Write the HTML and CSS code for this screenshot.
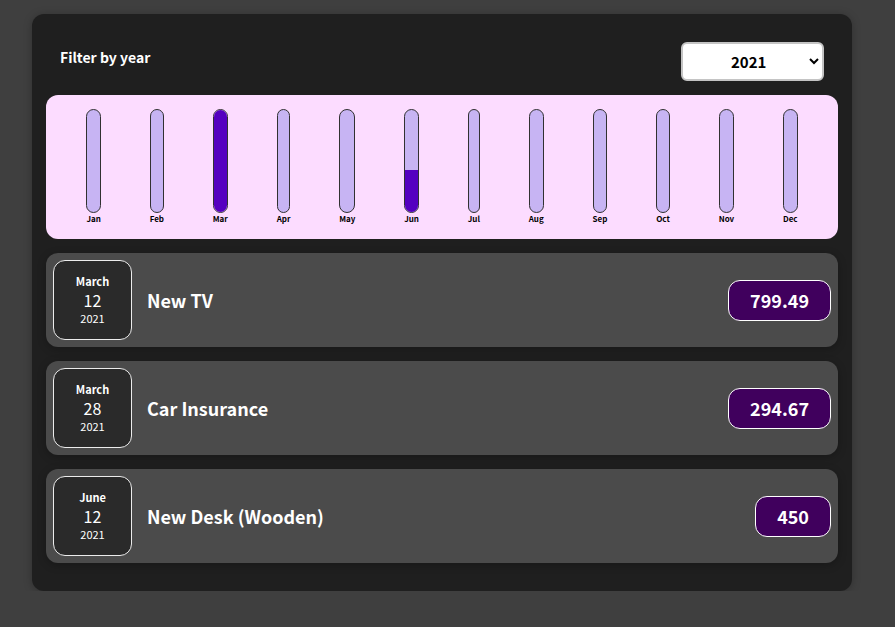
FILE: index.html
```html
<!DOCTYPE html>
<html lang="en">
<head>
<meta charset="utf-8">
<title>Expenses</title>
<link rel="stylesheet" href="styles.css">
</head>
<body>
<div class="expenses">
  <div class="filter">
    <div class="filter-control">
      <label class="filter-label">Filter by year</label>
      <select class="filter-select">
        <option>2022</option>
        <option selected>2021</option>
        <option>2020</option>
        <option>2019</option>
      </select>
    </div>
  </div>

  <div class="chart">
    <div class="bar"><div class="bar-inner"><div class="bar-fill" style="height:0%"></div></div><div class="bar-label">Jan</div></div>
    <div class="bar"><div class="bar-inner"><div class="bar-fill" style="height:0%"></div></div><div class="bar-label">Feb</div></div>
    <div class="bar"><div class="bar-inner"><div class="bar-fill" style="height:100%"></div></div><div class="bar-label">Mar</div></div>
    <div class="bar"><div class="bar-inner"><div class="bar-fill" style="height:0%"></div></div><div class="bar-label">Apr</div></div>
    <div class="bar"><div class="bar-inner"><div class="bar-fill" style="height:0%"></div></div><div class="bar-label">May</div></div>
    <div class="bar"><div class="bar-inner"><div class="bar-fill" style="height:41.1%"></div></div><div class="bar-label">Jun</div></div>
    <div class="bar"><div class="bar-inner"><div class="bar-fill" style="height:0%"></div></div><div class="bar-label">Jul</div></div>
    <div class="bar"><div class="bar-inner"><div class="bar-fill" style="height:0%"></div></div><div class="bar-label">Aug</div></div>
    <div class="bar"><div class="bar-inner"><div class="bar-fill" style="height:0%"></div></div><div class="bar-label">Sep</div></div>
    <div class="bar"><div class="bar-inner"><div class="bar-fill" style="height:0%"></div></div><div class="bar-label">Oct</div></div>
    <div class="bar"><div class="bar-inner"><div class="bar-fill" style="height:0%"></div></div><div class="bar-label">Nov</div></div>
    <div class="bar"><div class="bar-inner"><div class="bar-fill" style="height:0%"></div></div><div class="bar-label">Dec</div></div>
  </div>

  <ul class="list">
    <li class="item">
      <div class="date">
        <div class="date-month">March</div>
        <div class="date-day">12</div>
        <div class="date-year">2021</div>
      </div>
      <h2 class="item-title">New TV</h2>
      <div class="price">799.49</div>
    </li>
    <li class="item">
      <div class="date">
        <div class="date-month">March</div>
        <div class="date-day">28</div>
        <div class="date-year">2021</div>
      </div>
      <h2 class="item-title">Car Insurance</h2>
      <div class="price">294.67</div>
    </li>
    <li class="item">
      <div class="date">
        <div class="date-month">June</div>
        <div class="date-day">12</div>
        <div class="date-year">2021</div>
      </div>
      <h2 class="item-title">New Desk (Wooden)</h2>
      <div class="price">450</div>
    </li>
  </ul>
</div>
</body>
</html>
```

FILE: styles.css
```css
* { box-sizing: border-box; }

html, body {
  margin: 0;
  padding: 0;
}

body {
  background: #3f3f3f;
  font-family: "Noto Sans CJK JP", "Noto Sans", sans-serif;
  padding: 14px 0 0 32px;
}

.expenses {
  width: 820px;
  padding: 14px;
  background: #1f1f1f;
  border-radius: 12px;
  box-shadow: 0 1px 8px rgba(0, 0, 0, 0.25);
}

.filter {
  color: #fff;
  padding: 0 14px;
}

.filter-control {
  display: flex;
  align-items: center;
  justify-content: space-between;
  margin: 14px 0;
}

.filter-label {
  font-weight: bold;
  font-size: 14px;
  margin-bottom: 10px;
}

.filter-select {
  font-family: inherit;
  font-size: 15px;
  font-weight: bold;
  width: 143px;
  height: 39px;
  padding: 0 8px 0 44px;
  border-radius: 6px;
  border: 2px solid #c4c4c4;
  background: #fff;
  color: #000;
}

.chart {
  display: flex;
  justify-content: space-around;
  height: 144px;
  padding: 14px 16px;
  background: #fcdcff;
  border-radius: 12px;
}

.bar {
  display: flex;
  flex-direction: column;
  align-items: center;
  height: 100%;
}

.bar-inner {
  flex: 1;
  width: 100%;
  border: 1px solid #313131;
  border-radius: 12px;
  background: #c7b4f3;
  overflow: hidden;
  display: flex;
  flex-direction: column;
  justify-content: flex-end;
}

.bar-fill {
  width: 100%;
  background: #5500c0;
}

.bar-label {
  font-size: 8px;
  font-weight: bold;
  line-height: 12px;
  color: #000;
}

.list {
  list-style: none;
  margin: 0;
  padding: 0;
}

.item {
  display: flex;
  align-items: center;
  margin: 14px 0;
  padding: 7px;
  background: #4b4b4b;
  border-radius: 12px;
  box-shadow: 0 2px 8px rgba(0, 0, 0, 0.25);
}

.date {
  width: 79px;
  height: 80px;
  flex: none;
  display: flex;
  flex-direction: column;
  align-items: center;
  justify-content: center;
  border: 1px solid #ececec;
  background: #2a2a2a;
  color: #fff;
  border-radius: 12px;
}

.date-month {
  font-size: 11px;
  font-weight: bold;
  line-height: 18px;
  margin-top: -2px;
}

.date-day {
  font-size: 16px;
  line-height: 20px;
}

.date-year {
  font-size: 11px;
  line-height: 17px;
}

.item-title {
  flex: 1;
  margin: 0 15px;
  color: #fff;
  font-size: 18px;
  font-weight: bold;
}

.price {
  font-size: 18px;
  font-weight: bold;
  color: #fff;
  background: #40005d;
  border: 1px solid #fff;
  border-radius: 12px;
  padding: 0 21px;
  height: 41px;
  line-height: 39px;
}
```
